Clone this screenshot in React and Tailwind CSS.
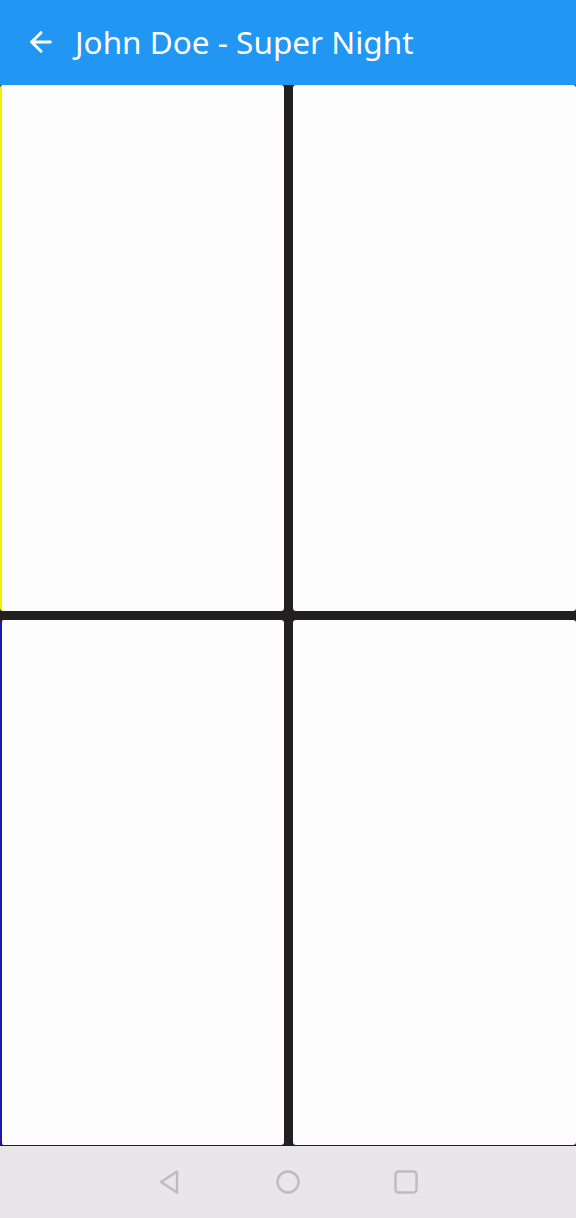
import { ArrowLeft } from "lucide-react";

function Cell({ edge }) {
  return (
    <div
      className={
        "rounded-[3px] bg-[#fdfdfd] " +
        (edge === "yellow"
          ? "border-l-2 border-[#f4f000]"
          : edge === "blue"
          ? "border-l-2 border-[#1a1aa8]"
          : "")
      }
    />
  );
}

export default function App() {
  return (
    <div
      className="flex h-[1218px] w-[576px] flex-col overflow-hidden bg-[#231f20]"
      style={{ fontFamily: '"Noto Sans", "Open Sans", sans-serif' }}
    >
      <header className="flex h-[85px] shrink-0 items-center bg-[#2196f3] pl-[25px] text-white">
        <ArrowLeft size={32} strokeWidth={2.2} className="-mt-[1px]" />
        <h1 className="ml-[18px] -mt-[2px] text-[31.5px] leading-none tracking-[0px]">
          John Doe - Super Night
        </h1>
      </header>

      <main className="grid flex-1 grid-cols-[284px_1fr] grid-rows-2 gap-x-[9px] gap-y-[9px] pb-px">
        <Cell edge="yellow" />
        <Cell />
        <Cell edge="blue" />
        <Cell />
      </main>

      <nav className="flex h-[72px] shrink-0 items-center justify-center gap-[92px] bg-[#e8e6e9]">
        <svg width="26" height="26" viewBox="0 0 26 26" fill="none" stroke="#bdbbbd" strokeWidth="2.4" strokeLinejoin="round">
          <path d="M20 2.5 L4 13 L20 23.5 Z" />
        </svg>
        <svg width="26" height="26" viewBox="0 0 26 26" fill="none" stroke="#bdbbbd" strokeWidth="2.4">
          <circle cx="13" cy="13" r="10.5" />
        </svg>
        <svg width="26" height="26" viewBox="0 0 26 26" fill="none" stroke="#bdbbbd" strokeWidth="2.4">
          <rect x="2.5" y="2.5" width="21" height="21" rx="3" />
        </svg>
      </nav>
    </div>
  );
}
